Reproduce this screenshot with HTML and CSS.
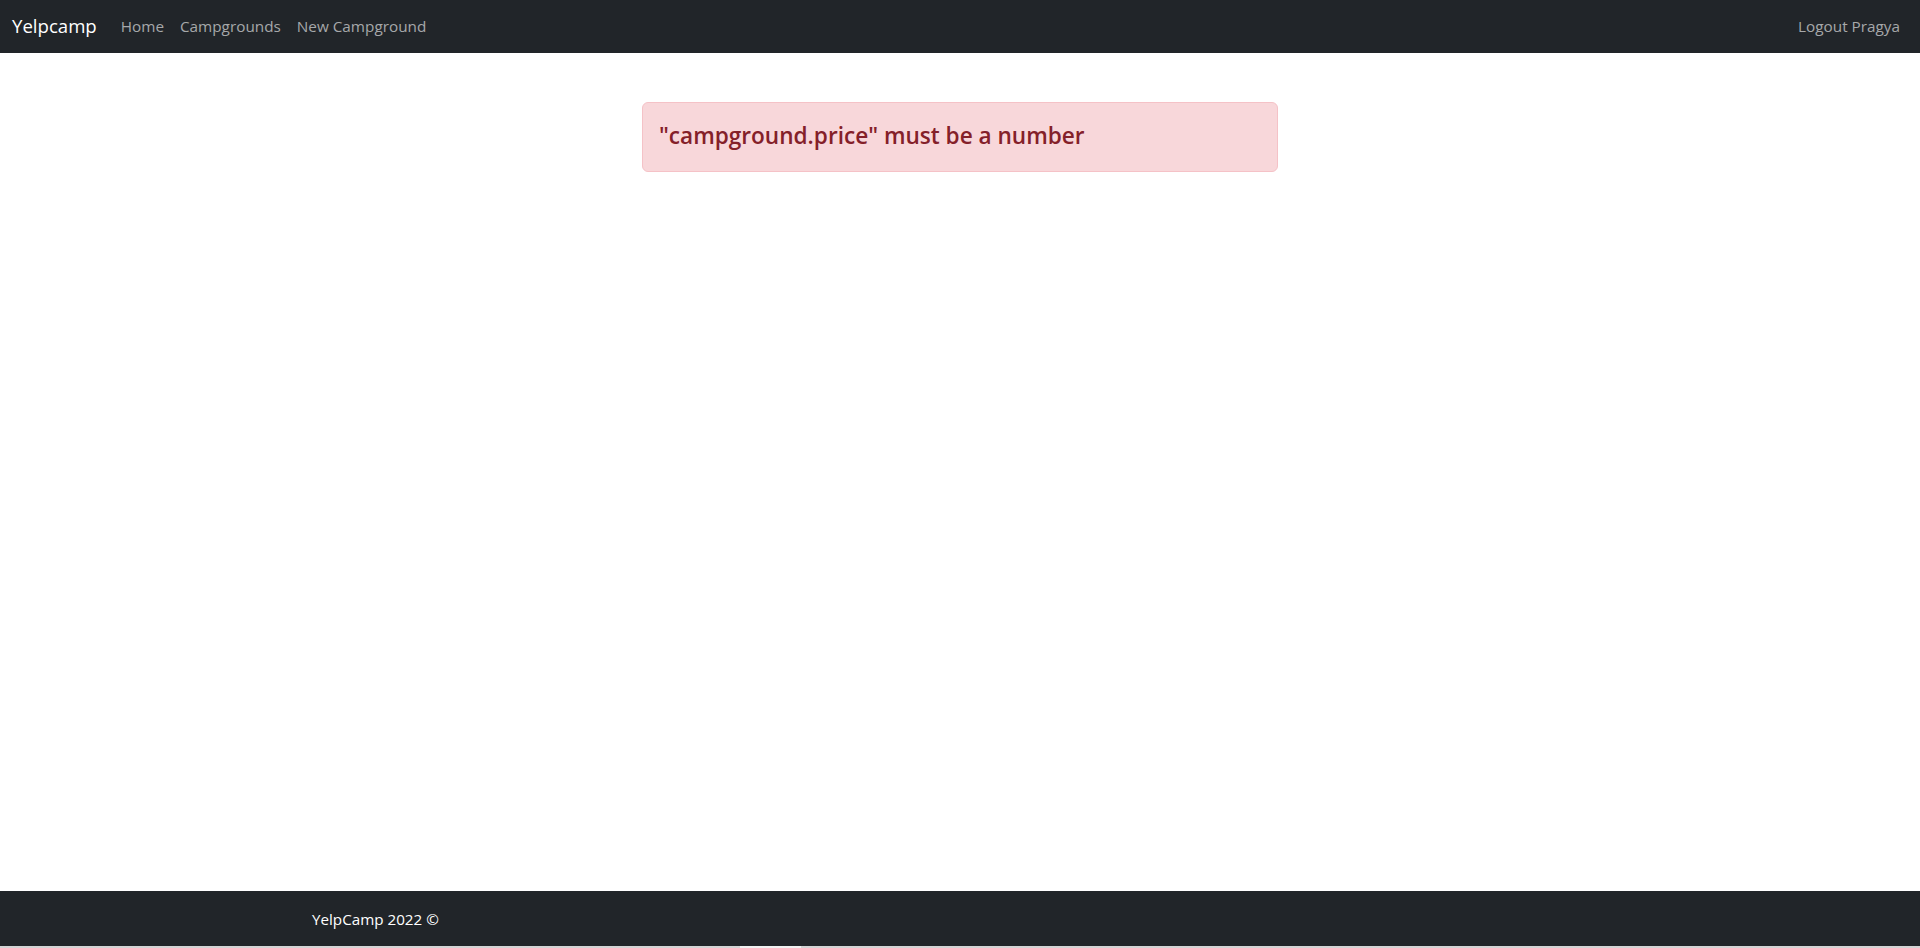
FILE: index.html
```html
<!DOCTYPE html>
<html lang="en">
<head>
<meta charset="utf-8">
<title>YelpCamp</title>
<link rel="stylesheet" href="styles.css">
</head>
<body>
<nav class="navbar">
  <div class="nav-left">
    <a class="brand" href="#">Yelpcamp</a>
    <a class="nav-link" href="#">Home</a>
    <a class="nav-link" href="#">Campgrounds</a>
    <a class="nav-link" href="#">New Campground</a>
  </div>
  <div class="nav-right">
    <a class="nav-link" href="#">Logout Pragya</a>
  </div>
</nav>
<main class="main">
  <div class="container">
    <div class="alert">
      <h4 class="alert-text">"campground.price" must be a number</h4>
    </div>
  </div>
</main>
<footer class="footer">
  <div class="container footer-inner">
    <span class="footer-text">YelpCamp 2022 ©</span>
  </div>
</footer>
<div class="hscroll"><div class="hscroll-thumb"></div></div>
</body>
</html>
```

FILE: styles.css
```css
* { box-sizing: border-box; }
html, body { height: 100%; }
body {
  margin: 0;
  font-family: "Open Sans", "Noto Sans", sans-serif;
  color: #212529;
  background: #fff;
  display: flex;
  flex-direction: column;
  min-height: 948px;
  overflow: hidden;
}
a { text-decoration: none; }

.navbar {
  height: 53px;
  background: #212529;
  display: flex;
  align-items: center;
  justify-content: space-between;
  padding: 0 12px;
  flex-shrink: 0;
}
.nav-left, .nav-right {
  display: flex;
  align-items: center;
}
.brand {
  color: #fff;
  font-size: 18.6px;
  margin-right: 16px;
  line-height: 1;
  padding-bottom: 1px;
}
.nav-link {
  color: #a6a8aa;
  font-size: 15.3px;
  padding: 0 8px;
  line-height: 1;
}

.main {
  flex: 1;
  padding-top: 49px;
}
.container {
  width: 1320px;
  margin: 0 auto;
  padding: 0 12px;
}
.alert {
  width: 636px;
  margin-left: 330px;
  height: 70px;
  background: #f8d7da;
  border: 1px solid #f5c2c7;
  border-radius: 6px;
  display: flex;
  align-items: center;
  padding: 0 16px;
}
.alert-text {
  margin: 0;
  color: #842029;
  font-size: 22.6px;
  font-weight: 600;
  line-height: 1.2;
  padding-bottom: 3px;
}

.footer {
  height: 55px;
  background: #212529;
  flex-shrink: 0;
  display: flex;
  align-items: center;
}
.footer-inner {
  display: flex;
  align-items: center;
  padding-top: 1px;
}
.footer-text {
  color: #fff;
  font-size: 15.2px;
}
.hscroll {
  height: 2px;
  background: #d4d4d4;
  flex-shrink: 0;
  position: relative;
}
.hscroll-thumb {
  position: absolute;
  left: 740px;
  width: 61px;
  top: 0;
  height: 2px;
  background: #f1f1f1;
}
```
